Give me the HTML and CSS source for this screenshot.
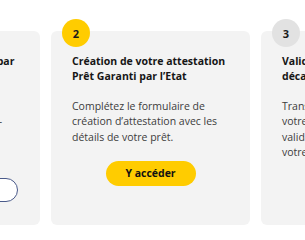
FILE: index.html
```html
<!DOCTYPE html>
<html lang="fr">
<head>
<meta charset="utf-8">
<link rel="stylesheet" href="styles.css">
</head>
<body>
<div class="viewport">
  <div class="track">
    <div class="card">
      <span class="badge badge-done">1</span>
      <h3 class="title">Création de votre dossier par<br>votre banque</h3>
      <p class="text">Connectez-vous avec vos<br>identifiants bancaires sur l’e-<br>espace de votre conseiller<br>bancaire.</p>
      <a class="btn btn-outline">Me connecter</a>
    </div>
    <div class="card">
      <span class="badge badge-active">2</span>
      <h3 class="title">Création de votre attestation<br>Prêt Garanti par l’Etat</h3>
      <p class="text">Complétez le formulaire de<br>création d’attestation avec les<br>détails de votre prêt.</p>
      <a class="btn btn-primary">Y accéder</a>
    </div>
    <div class="card">
      <span class="badge badge-todo">3</span>
      <h3 class="title">Validation et<br>décaissement</h3>
      <p class="text">Transmettez l’attestation à<br>votre banque pour<br>validation et décaissement de<br>votre prêt.</p>
    </div>
  </div>
</div>
</body>
</html>
```
FILE: styles.css
```css
html, body {
  margin: 0;
  padding: 0;
  background: #ffffff;
}
body {
  font-family: "Open Sans", "Noto Sans", sans-serif;
  color: #1a1a1a;
}
.viewport {
  width: 305px;
  height: 240px;
  overflow: hidden;
}
.track {
  display: flex;
  gap: 11px;
  margin-left: -159px;
  padding-top: 31px;
}
.card {
  position: relative;
  flex: 0 0 199px;
  height: 194px;
  box-sizing: border-box;
  background: #f3f3f3;
  border-radius: 6px;
  padding: 23px 21px 0;
  display: flex;
  flex-direction: column;
}
.badge {
  position: absolute;
  top: -12px;
  left: 11px;
  width: 28px;
  height: 28px;
  border-radius: 50%;
  display: flex;
  align-items: center;
  justify-content: center;
  font-size: 11px;
  font-weight: 700;
  color: #1a1a1a;
}
.badge-active { background: #ffcc00; }
.badge-todo { background: #e2e2e2; }
.badge-done { background: #e2e2e2; }
.title {
  margin: 0;
  font-size: 10.5px;
  line-height: 15px;
  font-weight: 700;
  color: #161616;
  white-space: nowrap;
}
.text {
  margin: 15px 0 0;
  font-size: 10.5px;
  line-height: 15.3px;
  color: #3c3c3c;
  white-space: nowrap;
}
.btn {
  align-self: center;
  margin-top: 16px;
  box-sizing: border-box;
  height: 25px;
  border-radius: 13px;
  display: flex;
  align-items: center;
  justify-content: center;
  font-size: 10.5px;
  font-weight: 700;
  color: #111;
}
.btn-primary {
  width: 90px;
  background: #ffcc00;
}
.btn-outline {
  width: 155px;
  height: 24px;
  margin-top: 18px;
  border: 1px solid #4a5a8a;
  background: #fff;
  color: #2a3a6a;
}
```
